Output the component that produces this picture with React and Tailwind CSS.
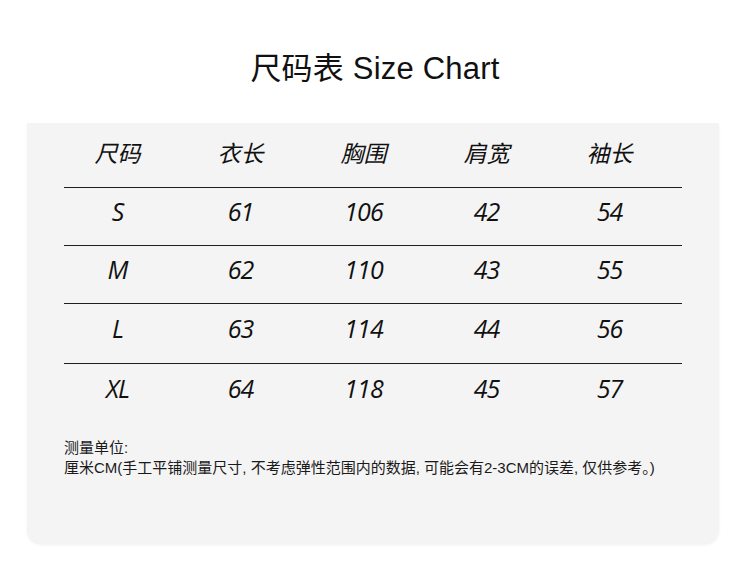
const headers = ["尺码", "衣长", "胸围", "肩宽", "袖长"];

const rows = [
	{ cells: ["S", "61", "106", "42", "54"], h: "h-[58px] border-b border-[#1f1f1f]" },
	{ cells: ["M", "62", "110", "43", "55"], h: "h-[58px] border-b border-[#1f1f1f]" },
	{ cells: ["L", "63", "114", "44", "56"], h: "h-[60px] border-b border-[#1f1f1f]" },
	{ cells: ["XL", "64", "118", "45", "57"], h: "h-[58px]" },
];

const cjk = "font-['Liberation_Sans','Noto_Sans_CJK_SC',sans-serif]";

const App = () => {
	return (
		<div className={`w-[750px] h-[568px] bg-white text-[#111] ${cjk}`}>
			<div className="h-[123px] flex items-center justify-center pt-[14px]">
				<h1 className="text-[31px] leading-none font-normal tracking-[0.2px]">
					尺码表 Size Chart
				</h1>
			</div>

			<div className="ml-[27px] w-[692px] h-[420px] bg-[#f4f4f4] rounded-b-[14px] shadow-[0_2px_3px_rgba(0,0,0,0.06)] px-[37px]">
				{/* header */}
				<div className="h-[65px] pb-[5px] flex items-center border-b border-[#1f1f1f]">
					<div className="-ml-[8px] grid grid-cols-[repeat(5,123px)]">
						{headers.map((t) => (
							<div
								key={t}
								className="text-center text-[23px] italic leading-none font-['Noto_Sans_CJK_SC',sans-serif]">
								{t}
							</div>
						))}
					</div>
				</div>

				{rows.map((r) => (
					<div key={r.cells[0]} className={`${r.h} pb-[10px] flex items-center`}>
						<div className="-ml-[8px] grid grid-cols-[repeat(5,123px)]">
							{r.cells.map((c, i) => (
								<div
									key={i}
									className="text-center text-[25px] italic leading-none tracking-[-1px] font-['Open_Sans',sans-serif]">
									{c}
								</div>
							))}
						</div>
					</div>
				))}

				<div className="mt-[16px] -mr-[30px] text-[15px] leading-[20px] text-[#1a1a1a]">
					<p>测量单位:</p>
					<p className="whitespace-nowrap">
						厘米CM(手工平铺测量尺寸, 不考虑弹性范围内的数据, 可能会有2-3CM的误差, 仅供参考。)
					</p>
				</div>
			</div>
		</div>
	);
};

export default App;
